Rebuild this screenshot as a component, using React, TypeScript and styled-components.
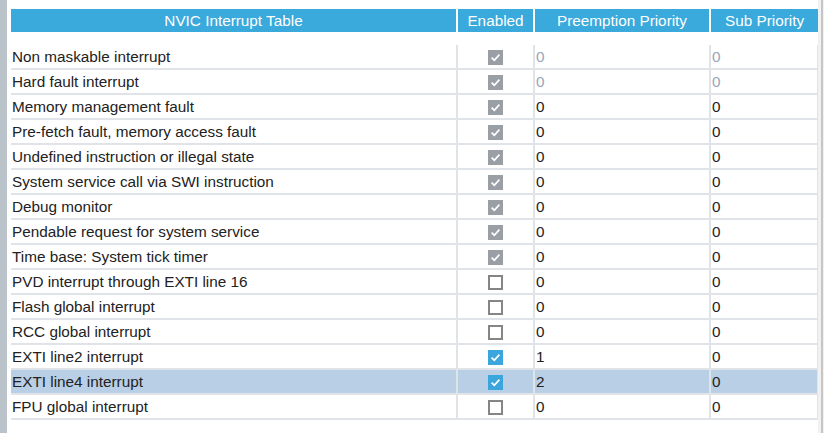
import React from 'react'
import styled, { createGlobalStyle, css } from 'styled-components'

const GlobalStyle = createGlobalStyle`
  html, body {
    margin: 0;
    padding: 0;
    background: #ffffff;
  }
  body {
    font-family: "Liberation Sans", Arial, sans-serif;
    font-size: 15.3px;
  }
`

type CheckState = 'locked' | 'on' | 'off'

interface Interrupt {
  name: string
  enabled: CheckState
  preemption: number
  sub: number
  dim?: boolean
}

const interrupts: Interrupt[] = [
  { name: 'Non maskable interrupt', enabled: 'locked', preemption: 0, sub: 0, dim: true },
  { name: 'Hard fault interrupt', enabled: 'locked', preemption: 0, sub: 0, dim: true },
  { name: 'Memory management fault', enabled: 'locked', preemption: 0, sub: 0 },
  { name: 'Pre-fetch fault, memory access fault', enabled: 'locked', preemption: 0, sub: 0 },
  { name: 'Undefined instruction or illegal state', enabled: 'locked', preemption: 0, sub: 0 },
  { name: 'System service call via SWI instruction', enabled: 'locked', preemption: 0, sub: 0 },
  { name: 'Debug monitor', enabled: 'locked', preemption: 0, sub: 0 },
  { name: 'Pendable request for system service', enabled: 'locked', preemption: 0, sub: 0 },
  { name: 'Time base: System tick timer', enabled: 'locked', preemption: 0, sub: 0 },
  { name: 'PVD interrupt through EXTI line 16', enabled: 'off', preemption: 0, sub: 0 },
  { name: 'Flash global interrupt', enabled: 'off', preemption: 0, sub: 0 },
  { name: 'RCC global interrupt', enabled: 'off', preemption: 0, sub: 0 },
  { name: 'EXTI line2 interrupt', enabled: 'on', preemption: 1, sub: 0 },
  { name: 'EXTI line4 interrupt', enabled: 'on', preemption: 2, sub: 0 },
  { name: 'FPU global interrupt', enabled: 'off', preemption: 0, sub: 0 },
]

const SELECTED = 13

const App = () => (
  <>
    <GlobalStyle />
    <Frame>
      <SideStrip />
      <Panel>
        <Table>
          <HeaderCell>NVIC Interrupt Table</HeaderCell>
          <HeaderCell>Enabled</HeaderCell>
          <HeaderCell>Preemption Priority</HeaderCell>
          <HeaderCell last>Sub Priority</HeaderCell>
          <Spacer />
          {interrupts.map((row, i) => {
            const selected = i === SELECTED
            return (
              <React.Fragment key={row.name}>
                <Cell selected={selected}>{row.name}</Cell>
                <Cell selected={selected} center>
                  <CheckBox state={row.enabled}>
                    {row.enabled !== 'off' && (
                      <svg width="15" height="15" viewBox="0 0 15 15">
                        <path
                          d="M3.6 7.6 L6.3 10.2 L11.4 4.6"
                          fill="none"
                          stroke="#ffffff"
                          strokeWidth="1.7"
                        />
                      </svg>
                    )}
                  </CheckBox>
                </Cell>
                <Cell selected={selected} dim={row.dim}>{row.preemption}</Cell>
                <Cell selected={selected} dim={row.dim} last>{row.sub}</Cell>
              </React.Fragment>
            )
          })}
        </Table>
      </Panel>
      <Gutter />
    </Frame>
  </>
)

const Frame = styled.div`
  display: flex;
  height: 433px;
  width: 824px;
  overflow: hidden;
`

const SideStrip = styled.div`
  width: 7px;
  flex: none;
  background: #b9c3c9;
`

const Panel = styled.div`
  flex: 1;
  padding: 9px 0 0 4px;
`

const Table = styled.div`
  display: grid;
  grid-template-columns: 447px 77px 176px 107px;
  grid-template-rows: 23px 13px;
  grid-auto-rows: 25px;
`

interface HeaderCellProps {
  last?: boolean
}

const HeaderCell = styled.div<HeaderCellProps>`
  height: 23px;
  background: #3aa9db;
  color: #ffffff;
  line-height: 23px;
  text-align: center;
  white-space: nowrap;
  border-right: ${(props: HeaderCellProps) => (props.last ? '0' : '2px solid #ffffff')};
`

const Spacer = styled.div`
  grid-column: 1 / -1;
`

interface CellProps {
  selected?: boolean
  center?: boolean
  dim?: boolean
  last?: boolean
}

const Cell = styled.div<CellProps>`
  display: flex;
  align-items: center;
  box-sizing: border-box;
  height: 25px;
  padding: 1px 1px 0 1px;
  white-space: nowrap;
  color: ${(props: CellProps) => (props.dim ? '#9ba6b8' : '#222222')};
  background: ${(props: CellProps) => (props.selected ? '#b8cfe5' : '#ffffff')};
  border-bottom: 2px solid #e0e4e8;
  border-right: ${(props: CellProps) => (props.last ? '1px' : '2px')} solid #e0e4e8;

  ${(props: CellProps) => props.center && css`
    justify-content: center;
  `}
`

interface CheckBoxProps {
  state: CheckState
}

const CheckBox = styled.span<CheckBoxProps>`
  display: block;
  box-sizing: border-box;
  width: 15px;
  height: 15px;

  ${(props: CheckBoxProps) => props.state === 'locked' && css`
    background: #9a9fa5;
  `}
  ${(props: CheckBoxProps) => props.state === 'on' && css`
    background: #3aa6dc;
  `}
  ${(props: CheckBoxProps) => props.state === 'off' && css`
    background: #ffffff;
    border: 2px solid #858585;
  `}

  svg {
    display: block;
  }
`

const Gutter = styled.div`
  width: 6px;
  flex: none;
  background: #f1f1f1;
  border-right: 1px solid #f1f1f1;
  box-shadow: inset -2px 0 0 #c6c6c6;
  box-sizing: border-box;
`

export default App
